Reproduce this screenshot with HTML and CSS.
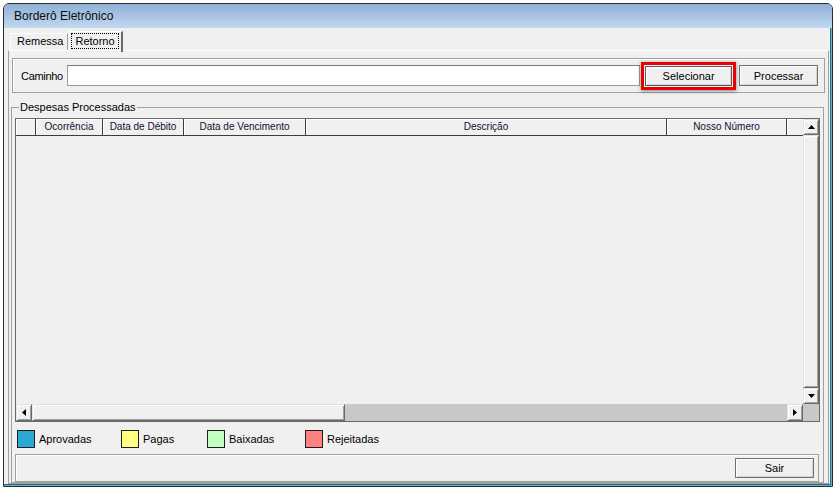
FILE: index.html
```html
<!doctype html>
<html>

<head>
	<meta charset="utf-8">
	<title>Borderô Eletrônico</title>
	<link rel="stylesheet" href="styles.css">
</head>

<body>
	<div class="window">
		<div class="titlebar">Borderô Eletrônico</div>
		<div class="client">
			<div class="tabs">
				<div class="tab">Remessa</div>
				<div class="tab active"><span class="focus">Retorno</span></div>
			</div>
			<div class="sheet">
				<div class="path-panel">
					<span class="path-label">Caminho</span>
					<div class="path-input"></div>
					<div class="highlight">
						<button class="btn btn-select">Selecionar</button>
					</div>
					<button class="btn btn-process">Processar</button>
				</div>

				<fieldset class="group">
					<legend>Despesas Processadas</legend>
					<div class="grid">
						<div class="grid-header">
							<div class="col col-ind"></div>
							<div class="col col-oco">Ocorrência</div>
							<div class="col col-deb">Data de Débito</div>
							<div class="col col-venc">Data de Vencimento</div>
							<div class="col col-desc">Descrição</div>
							<div class="col col-nosso">Nosso Número</div>
							<div class="col col-fill"></div>
						</div>
						<div class="grid-body"></div>
						<div class="hscroll">
							<div class="sb-btn"><svg width="4" height="7" viewBox="0 0 4 7"><path d="M4 0V7L0 3.5Z" fill="#000"/></svg></div>
							<div class="sb-thumb sb-thumb-h"></div>
							<div class="sb-track"></div>
							<div class="sb-btn"><svg width="4" height="7" viewBox="0 0 4 7"><path d="M0 0V7L4 3.5Z" fill="#000"/></svg></div>
						</div>
						<div class="vscroll">
							<div class="sb-btn"><svg width="7" height="4" viewBox="0 0 7 4"><path d="M0 4H7L3.5 0Z" fill="#000"/></svg></div>
							<div class="sb-thumb sb-thumb-v"></div>
							<div class="sb-btn"><svg width="7" height="4" viewBox="0 0 7 4"><path d="M0 0H7L3.5 4Z" fill="#000"/></svg></div>
						</div>
						<div class="corner"></div>
					</div>

					<div class="legend-row">
						<div class="legend-item"><span class="swatch sw-blue"></span>Aprovadas</div>
						<div class="legend-item"><span class="swatch sw-yellow"></span>Pagas</div>
						<div class="legend-item"><span class="swatch sw-green"></span>Baixadas</div>
						<div class="legend-item"><span class="swatch sw-red"></span>Rejeitadas</div>
					</div>

					<div class="bottom-panel">
						<button class="btn btn-exit">Sair</button>
					</div>
				</fieldset>
			</div>
		</div>
	</div>
</body>

</html>
```

FILE: styles.css
```css
* {
	margin: 0;
	padding: 0;
	box-sizing: border-box;
}

body {
	background: #fff;
	font-family: "Liberation Sans", Arial, sans-serif;
	font-size: 11px;
	color: #000;
}

.window {
	margin: 3px 0 0 3px;
	width: 830px;
	height: 484px;
	border: 1px solid #2b2b2b;
	border-radius: 6px 6px 0 0;
	background: #f0f0f0;
	display: flex;
	flex-direction: column;
	overflow: hidden;
}

.titlebar {
	height: 24px;
	line-height: 24px;
	padding-left: 10px;
	font-size: 12px;
	color: #0c0c0c;
	background: linear-gradient(#8fb0d6, #c2d8f0);
}

.client {
	flex: 1;
	padding: 3px 0 0 4px;
	border-right: 1px solid #3cc0ee;
	border-bottom: 1px solid #3cc0ee;
	box-shadow: inset -1px -1px 0 #5a5a5a;
}

/* abas */
.tabs {
	display: flex;
	align-items: flex-end;
	height: 19px;
	margin-left: 2px;
}

.tab {
	height: 17px;
	padding: 0 4px 0 6px;
	line-height: 15px;
	border: 1px solid #fff;
	border-right-color: #a0a0a0;
	border-bottom: none;
}

.tab.active {
	position: relative;
	height: 21px;
	margin-bottom: -2px;
	margin-left: 1px;
	padding: 1px 2px 0 1px;
	border-right: 2px solid #696969;
	background: #f0f0f0;
	z-index: 1;
}

.focus {
	display: block;
	padding: 0 3px;
	height: 16px;
	line-height: 14px;
	border: 1px dotted #000;
}

.sheet {
	width: 821px;
	height: 434px;
	border: 1px solid #a0a0a0;
	border-top-color: #fff;
}

/* caminho */
.path-panel {
	display: flex;
	align-items: center;
	width: 813px;
	height: 35px;
	margin: 7px 0 0 3px;
	padding: 0 6px 0 8px;
	border: 1px solid #a0a0a0;
	box-shadow: inset 1px 1px 0 #fff;
}

.path-label {
	width: 46px;
	letter-spacing: -0.3px;
}

.path-input {
	width: 574px;
	height: 21px;
	background: #fff;
	border: 1px solid #9c9c9c;
	border-top-color: #7a7a7a;
}

.highlight {
	margin-left: 1px;
	width: 95px;
	height: 28px;
	padding: 1px;
	border: 3px solid #ea0000;
	box-shadow: 0 1px 4px rgba(0, 0, 0, 0.45);
}

.btn {
	font-family: "Liberation Sans", Arial, sans-serif;
	font-size: 11px;
	color: #000;
	background: #f0f0f0;
	border: 1px solid #707070;
	box-shadow: inset 1px 1px 0 #fff, inset -1px -1px 0 #d4d4d4;
}

.btn-select {
	display: block;
	width: 87px;
	height: 20px;
	border-color: #5c5c5c;
}

.btn-process {
	margin-left: 3px;
	width: 79px;
	height: 21px;
}

/* grupo */
.group {
	width: 813px;
	height: 382px;
	margin: 8px 0 0 2px;
	padding: 0 3px;
	border: 1px solid #a0a0a0;
	min-width: 0;
}

.group legend {
	margin-left: 4px;
	padding: 0 1px;
	line-height: 13px;
}

.grid {
	display: grid;
	grid-template-columns: 787px 16px;
	grid-template-rows: 17px 268px 17px;
	width: 805px;
	margin-top: 4px;
	border: 1px solid #696969;
}

.grid-header {
	display: flex;
	grid-column: 1;
	grid-row: 1;
	font-size: 10px;
	color: #101030;
}

.col {
	height: 17px;
	line-height: 16px;
	text-align: center;
	white-space: nowrap;
	border-right: 1px solid #3c3c3c;
	border-bottom: 1px solid #3c3c3c;
	box-shadow: inset 1px 1px 0 #fff;
}

.col-ind { width: 20px; }
.col-oco { width: 67px; }
.col-deb { width: 81px; }
.col-venc { width: 122px; }
.col-desc { width: 361px; }
.col-nosso { width: 120px; }
.col-fill { width: 16px; border-right: none; }

.grid-body {
	grid-column: 1;
	grid-row: 2;
}

.hscroll {
	grid-column: 1;
	grid-row: 3;
	display: flex;
}

.vscroll {
	grid-column: 2;
	grid-row: 1 / 3;
	display: flex;
	flex-direction: column;
}

.corner {
	grid-column: 2;
	grid-row: 3;
	background: #c8c8c8;
}

.sb-btn {
	display: flex;
	align-items: center;
	justify-content: center;
	width: 16px;
	height: 17px;
	background: #f0f0f0;
	border: 1px solid #e3e3e3;
	border-right-color: #696969;
	border-bottom-color: #696969;
	box-shadow: inset 1px 1px 0 #fff, inset -1px -1px 0 #a0a0a0;
}

.vscroll .sb-btn {
	height: 16px;
}

.sb-thumb {
	background: #f0f0f0;
	border: 1px solid #e3e3e3;
	border-right-color: #696969;
	border-bottom-color: #696969;
	box-shadow: inset 1px 1px 0 #fff, inset -1px -1px 0 #a0a0a0;
}

.sb-thumb-h {
	width: 313px;
}

.sb-thumb-v {
	flex: 1;
}

.sb-track {
	flex: 1;
	background: #c8c8c8;
}

/* legenda */
.legend-row {
	display: grid;
	grid-template-columns: 104px 86px 98px auto;
	height: 18px;
	margin: 8px 0 0 2px;
}

.legend-item {
	display: flex;
	align-items: center;
}

.swatch {
	width: 18px;
	height: 18px;
	margin-right: 4px;
	border: 1px solid #1e1e1e;
}

.sw-blue { background: #29a9d4; }
.sw-yellow { background: #ffff80; }
.sw-green { background: #c0ffc0; }
.sw-red { background: #ff8080; }

.bottom-panel {
	display: flex;
	justify-content: flex-end;
	width: 804px;
	height: 28px;
	margin-top: 6px;
	padding: 3px 4px 0 0;
	border: 1px solid #a0a0a0;
	box-shadow: inset 1px 1px 0 #fff;
}

.btn-exit {
	width: 79px;
	height: 20px;
}
```
